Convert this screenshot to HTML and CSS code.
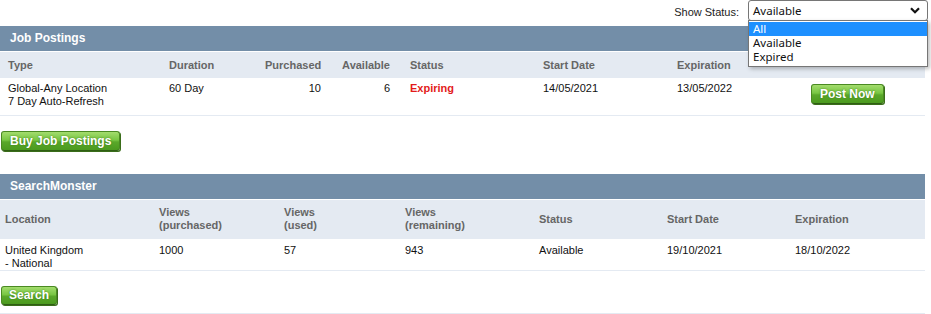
FILE: index.html
```html
<!DOCTYPE html>
<html lang="en">
<head>
  <meta charset="utf-8" />
  <title>Products</title>
  <link rel="stylesheet" href="styles.css">
</head>
<body>
  <div class="page">
    <div class="filter">
      <label for="show_status">Show Status:</label>
      <div class="select" id="show_status">
        <span>Available</span>
        <svg class="chevron" width="10" height="7" viewBox="0 0 10 7">
          <path d="M1 1.2 L5 5.2 L9 1.2" fill="none" stroke="#111" stroke-width="2.2" />
        </svg>
        <ul class="options">
          <li class="selected">All</li>
          <li>Available</li>
          <li>Expired</li>
        </ul>
      </div>
    </div>

    <div class="section">
      <div class="bar">Job Postings</div>
      <table class="grid jobs">
        <colgroup>
          <col style="width:161px"><col style="width:96px"><col style="width:72px"><col style="width:69px">
          <col style="width:137px"><col style="width:134px"><col style="width:134px"><col>
        </colgroup>
        <tr class="head">
          <th>Type</th>
          <th>Duration</th>
          <th class="num">Purchased</th>
          <th class="num">Available</th>
          <th class="status">Status</th>
          <th>Start Date</th>
          <th>Expiration</th>
          <th></th>
        </tr>
        <tr class="row">
          <td>Global-Any Location<br>7 Day Auto-Refresh</td>
          <td>60 Day</td>
          <td class="num">10</td>
          <td class="num">6</td>
          <td class="status expiring">Expiring</td>
          <td>14/05/2021</td>
          <td>13/05/2022</td>
          <td class="action"><a class="btn" href="#">Post Now</a></td>
        </tr>
      </table>
      <div class="actions">
        <a class="btn" href="#">Buy Job Postings</a>
      </div>
    </div>

    <div class="section">
      <div class="bar">SearchMonster</div>
      <table class="grid search">
        <colgroup>
          <col style="width:154px"><col style="width:125px"><col style="width:121px"><col style="width:134px">
          <col style="width:128px"><col style="width:128px"><col>
        </colgroup>
        <tr class="head">
          <th>Location</th>
          <th>Views<br>(purchased)</th>
          <th>Views<br>(used)</th>
          <th>Views<br>(remaining)</th>
          <th>Status</th>
          <th>Start Date</th>
          <th>Expiration</th>
        </tr>
        <tr class="row">
          <td>United Kingdom<br>- National</td>
          <td>1000</td>
          <td>57</td>
          <td>943</td>
          <td>Available</td>
          <td>19/10/2021</td>
          <td>18/10/2022</td>
        </tr>
      </table>
      <div class="actions last">
        <a class="btn small" href="#">Search</a>
      </div>
    </div>
  </div>
</body>
</html>
```

FILE: styles.css
```css
* {
  box-sizing: border-box;
}

body {
  margin: 0;
  font-family: 'Liberation Sans', Arial, sans-serif;
  font-size: 11px;
  color: #111;
  background: white;
}

.page {
  width: 929px;
}

.filter {
  height: 26px;
  display: flex;
  justify-content: flex-end;
  align-items: flex-start;
  gap: 9px;
  padding-right: 1px;
}

.filter label {
  margin-top: 6px;
  color: #222;
}

.select {
  position: relative;
  width: 180px;
  height: 21px;
  border: 1px solid #767676;
  border-radius: 3px;
  background: white;
  font-family: 'Noto Sans', sans-serif;
  font-size: 11.5px;
  color: #111;
  display: flex;
  align-items: center;
  justify-content: space-between;
  padding: 0 7px 0 4px;
}

.select span {
  line-height: 18px;
}

.options {
  position: absolute;
  top: 19px;
  left: -1px;
  width: 180px;
  margin: 0;
  padding: 1px 0 2px;
  list-style: none;
  background: white;
  border: 1px solid #767676;
  box-shadow: 2px 2px 4px rgba(0,0,0,0.25);
  z-index: 5;
}

.options li {
  height: 14px;
  line-height: 14px;
  padding-left: 4px;
  overflow: hidden;
}

.options li.selected {
  background: #1e90ff;
  color: white;
}

.section {
  width: 925px;
}

.bar {
  height: 26px;
  background: #738ea8;
  border-bottom: 1px solid white;
  color: white;
  font-weight: bold;
  font-size: 12px;
  line-height: 25px;
  padding-left: 10px;
}

.grid {
  width: 925px;
  border-collapse: collapse;
  table-layout: fixed;
}

.grid th, .grid td {
  padding: 0 8px;
  text-align: left;
  line-height: 13px;
}

.grid th {
  font-weight: bold;
  color: #666;
}

.grid .head {
  background: #e4eaf2;
}

.jobs .head th {
  height: 26px;
  vertical-align: middle;
}

.jobs .row td {
  height: 37px;
  padding-top: 4px;
  vertical-align: top;
  border-bottom: 1px solid #e4eaf2;
}

.grid .num {
  text-align: right;
}

.grid .status {
  padding-left: 12px;
}

.expiring {
  color: #e31b1b;
  font-weight: bold;
}

.jobs .row td.action {
  padding-top: 6px;
}

.search th, .search td {
  padding: 0 5px;
}

.search .head th {
  height: 39px;
  vertical-align: middle;
}

.search .row td {
  height: 32px;
  padding-top: 5px;
  vertical-align: top;
  border-bottom: 1px solid #e4eaf2;
}

.actions {
  padding: 15px 0 23px 1px;
}

.actions.last {
  padding: 15px 0 8px 1px;
  border-bottom: 1px solid #e4eaf2;
}

.btn {
  display: inline-block;
  height: 20px;
  line-height: 18px;
  padding: 0 8px;
  border: 1px solid #4a8a22;
  border-bottom-color: #2f5e14;
  border-radius: 3px;
  background: linear-gradient(#a3dc6d, #78c643 45%, #5aa82a 55%, #4b9a1f);
  color: white;
  font-weight: bold;
  font-size: 12px;
  text-decoration: none;
  text-shadow: 0 0 2px #3b7a17;
  box-shadow: 1px 1px 0 #3a6d1a;
}

.btn.small {
  height: 19px;
  line-height: 17px;
  padding: 0 7px;
}
```
